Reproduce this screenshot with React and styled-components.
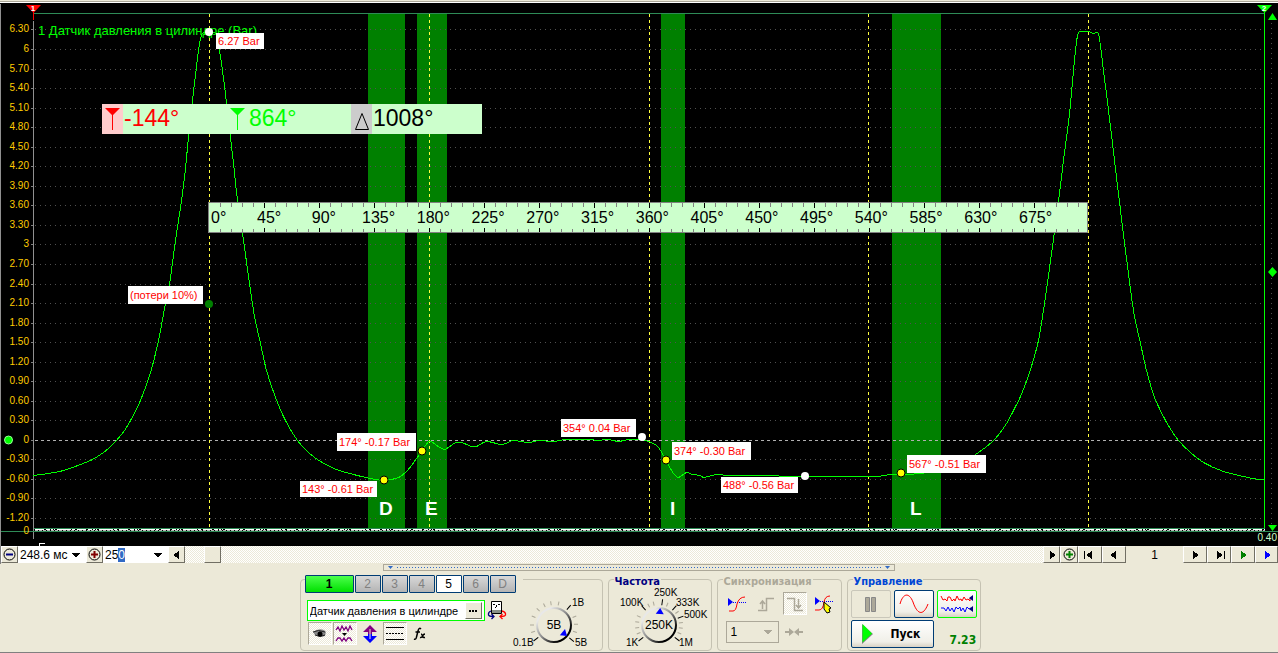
import React, { useEffect, useRef, useState } from "react";
import styled, { createGlobalStyle, css } from "styled-components";

const GlobalStyle = createGlobalStyle`
  * {
    box-sizing: border-box;
  }

  body {
    margin: 0;
    background: #ece9d8;
    color: #000;
    font-family: "Liberation Sans", Arial, sans-serif;
    font-size: 12px;
  }

  button, input, select {
    font: inherit;
    color: inherit;
    margin: 0;
    padding: 0;
    border-radius: 0;
  }
`;

// Chart drawing area, in chart units
const CHART = { x: 0, y: 3, width: 1278, height: 543 };
const left = (x) => `${((x - CHART.x) / CHART.width) * 100}%`;
const top = (y) => `${((y - CHART.y) / CHART.height) * 100}%`;

const TICKS = [
  ["6.30", 29], ["6", 49], ["5.70", 69], ["5.40", 88], ["5.10", 108], ["4.80", 127],
  ["4.50", 147], ["4.20", 166], ["3.90", 186], ["3.60", 205], ["3.30", 225], ["3", 244],
  ["2.70", 264], ["2.40", 284], ["2.10", 303], ["1.80", 323], ["1.50", 342], ["1.20", 362],
  ["0.90", 381], ["0.60", 401], ["0.30", 420], ["0", 440], ["-0.30", 459], ["-0.60", 479],
  ["-0.90", 498], ["-1.20", 518],
];

const BANDS = [
  { label: "D", x: 368, width: 37, textX: 379 },
  { label: "E", x: 417, width: 30, textX: 425 },
  { label: "I", x: 661, width: 24, textX: 670 },
  { label: "L", x: 892, width: 49, textX: 910 },
];

const CYCLE_LINES = [209, 429, 649, 868, 1088];

const PRESSURE =
  "33,475 48,473 63,470 80,464 92,459 103,452 110,446 116,440 124,430 130,420 140,400 150,372 158,340 165,303 169,284 175,240 " +
  "180,207 184,177 188,137 192,100 196,66 199,43 201,35 203,32 214,32 217,38 219,50 222,70 226,102 230,137 233,163 237,200 243,240 249,283 " +
  "254,316 260,343 266,370 275,397 285,420 297,440 308,452 320,461 336,469 353,474 370,478 384,480 398,477 405,472 411,465 421,451 " +
  "428,441 431,441 435,444 444,449 455,442 461,442 471,446 476,446 486,441 500,444 505,443 513,440 528,442 538,440 553,441 565,439 " +
  "590,439 597,440 608,439 618,441 628,439 642,439 648,441 656,445 660,450 666,461 673,473 678,477 686,472 692,474 700,475 703,477 " +
  "716,474 728,475 756,475 805,476 873,476 890,474 920,473 955,465 975,454 993,440 1006,423 1015,406 1020,396 1029,372 1038,340 1044,303 " +
  "1046,289 1052,246 1058,201 1063,160 1069,113 1073,70 1075,50 1077,35 1079,31 1088,31 1093,33 1098,33 1103,70 1110,126 1114,160 " +
  "1120,210 1125,250 1130,289 1134,316 1140,343 1146,370 1154,397 1165,420 1171,430 1178,440 1190,452 1203,462 1223,471 1243,476 1258,479 1264,479";

// Catmull-Rom spline through the samples
const smooth = (samples) => {
  const pts = samples.split(" ").map((s) => s.split(",").map(Number));
  const at = (i) => pts[Math.max(0, Math.min(pts.length - 1, i))];
  let d = `M${pts[0]}`;
  for (let i = 0; i < pts.length - 1; i++) {
    const [p0, p1, p2, p3] = [at(i - 1), at(i), at(i + 1), at(i + 2)];
    // handles stay short next to corners so the curve never overshoots
    const k = Math.min(1, Math.hypot(p2[0] - p1[0], p2[1] - p1[1]) / 12) / 7;
    const c1 = [p1[0] + (p2[0] - p0[0]) * k, p1[1] + (p2[1] - p0[1]) * k];
    const c2 = [p2[0] - (p3[0] - p1[0]) * k, p2[1] - (p3[1] - p1[1]) * k];
    d += `C${c1} ${c2} ${p2}`;
  }
  return d;
};

const POINTS = [
  { x: 209, y: 32, fill: "#fff" },
  { x: 209, y: 304, fill: "#008000" },
  { x: 384, y: 480, fill: "#ff0" },
  { x: 422, y: 451, fill: "#ff0" },
  { x: 642, y: 437, fill: "#fff" },
  { x: 666, y: 460, fill: "#ff0" },
  { x: 805, y: 476, fill: "#fff" },
  { x: 901, y: 473, fill: "#ff0" },
];

const CALLOUTS = [
  { text: "6.27 Bar", x: 216, y: 33, width: 48 },
  { text: "(потери 10%)", x: 128, y: 286, width: 75, tall: true },
  { text: "143° -0.61 Bar", x: 300, y: 481, width: 77 },
  { text: "174° -0.17 Bar", x: 337, y: 433, width: 79, tall: true },
  { text: "354° 0.04 Bar", x: 561, y: 419, width: 75, tall: true },
  { text: "374° -0.30 Bar", x: 672, y: 442, width: 79, tall: true },
  { text: "488° -0.56 Bar", x: 721, y: 477, width: 77 },
  { text: "567° -0.51 Bar", x: 907, y: 455, width: 79, tall: true },
];

const hatch = css`
  background-color: #fff;
  background-image: conic-gradient(#ece9d8 25%, #fff 0 50%, #ece9d8 0 75%, #fff 0);
  background-size: 2px 2px;
`;

const Page = styled.main`
  border-bottom: 1px solid #808080;
  min-width: 720px;
`;

const TopEdge = styled.div`
  height: 3px;
  border-top: 1px solid #ece9d8;
  border-bottom: 1px solid #fff;
  background: #aca899;
`;

const Scope = styled.section`
  position: relative;
  width: 100%;
  background: #000;
  aspect-ratio: ${CHART.width} / ${CHART.height};
  overflow: hidden;
`;

const Plot = styled.svg`
  display: block;
  width: 100%;
  height: 100%;
  font-family: "Liberation Sans", Arial, sans-serif;
`;

const Callout = styled.div`
  position: absolute;
  left: ${(p) => left(p.$x)};
  top: ${(p) => top(p.$y)};
  width: ${(p) => p.$width}px;
  height: ${(p) => (p.$tall ? 18 : 16)}px;
  padding-left: 2px;
  background: #fff;
  color: #f00;
  font-size: 11px;
  line-height: ${(p) => (p.$tall ? 18 : 16)}px;
  white-space: nowrap;
`;

const Readout = styled.div`
  position: absolute;
  left: ${left(102)};
  top: ${top(104)};
  display: flex;
  height: 30px;
  background: #ccffcc;
  font-size: 23px;
  line-height: 28px;
`;

const ReadoutItem = styled.div`
  display: flex;
  gap: 1px;
  width: ${(p) => p.$width}px;
  color: ${(p) => p.$color};
`;

const ReadoutIcon = styled.svg`
  width: 21px;
  height: 30px;
  background: ${(p) => p.$bg};
`;

const Ruler = styled.div`
  position: absolute;
  left: ${left(208)};
  top: ${top(202)};
  width: ${(880 / CHART.width) * 100}%;
  height: 31px;
  border: 1px solid #808080;
  background: #ccffcc;
`;

const RulerTicks = styled.svg`
  position: absolute;
  inset: 0;
  width: 100%;
  height: 100%;
`;

const RulerLabels = styled.div`
  display: flex;
  font-size: 16px;
  line-height: 29px;
`;

const RulerLabel = styled.span`
  flex: 1 1 0;
  text-align: center;
  white-space: nowrap;

  &:first-child {
    padding-left: 2px;
    text-align: left;
  }

  &:not(:first-child) {
    position: relative;
    right: 24px;
  }
`;

const Toolbar = styled.div`
  display: flex;
  height: 18px;
  border-left: 1px solid #808080;
`;

const ToolButton = styled.button`
  display: flex;
  flex: none;
  align-items: center;
  justify-content: center;
  width: ${(p) => p.$width || 17}px;
  height: 17px;
  border: 1px solid;
  border-color: #fff #716f64 #716f64 #fff;
  background: #ece9d8;
`;

const Combo = styled.div`
  display: flex;
  flex: none;
  width: ${(p) => p.$width}px;
  height: 17px;
  background: #fff;
`;

const ComboInput = styled.input`
  flex: 1;
  min-width: 0;
  border: 0;
  outline: 0;
  padding-left: 2px;
  background: #fff;

  &::selection {
    background: #316ac5;
    color: #fff;
  }
`;

const ComboArrow = styled.button`
  display: flex;
  align-items: center;
  width: 16px;
  border: 0;
  background: #fff;
`;

const Scroll = styled.input`
  flex: 1;
  min-width: 0;
  height: 17px;
  appearance: none;
  ${hatch}

  &::-webkit-slider-thumb {
    appearance: none;
    width: 17px;
    height: 17px;
    border: 1px solid;
    border-color: #fff #716f64 #716f64 #fff;
    background: #ece9d8;
  }
`;

const PageNumber = styled.span`
  width: 57px;
  text-align: center;
  line-height: 18px;
`;

const Splitter = styled.div`
  display: flex;
  align-items: center;
  justify-content: space-between;
  width: 40%;
  height: 7px;
  margin: 0 auto;
  padding: 0 4px;
  border: 1px solid #aca899;
`;

const SplitterDots = styled.div`
  flex: 1;
  height: 1px;
  margin: 0 4px;
  background: repeating-linear-gradient(90deg, #316ac5 0 1px, transparent 1px 3px);
`;

const Controls = styled.div`
  display: flex;
  justify-content: center;
  gap: 5px;
  padding: 8px 0 1px 2px;
`;

const Group = styled.section`
  display: flex;
  flex-direction: ${(p) => (p.$row ? "row" : "column")};
  width: ${(p) => p.$width}px;
  height: 72px;
  border: 1px solid #c5c2b2;
  border-radius: 4px;
`;

const GroupTitle = styled.h2`
  align-self: flex-start;
  margin: -5px 0 0 5px;
  padding: 0 1px;
  background: #ece9d8;
  color: ${(p) => p.$color};
  font-family: "DejaVu Sans Condensed", "DejaVu Sans", sans-serif;
  font-size: 11px;
  font-weight: bold;
  line-height: 13px;
`;

const ChannelColumn = styled.div`
  flex: none;
  width: 222px;
`;

const Channels = styled.div`
  display: flex;
  gap: 1px;
  margin: -5px 0 0 4px;
  padding-right: 4px;
  background: #ece9d8;
`;

const ChannelButton = styled.button`
  flex: none;
  width: ${(p) => (p.$wide ? 49 : 26)}px;
  height: 18px;
  border: 1px solid #003c74;
  border-radius: 1px;
  background: ${(p) =>
    p.$wide
      ? "linear-gradient(#4cff4c, #00e000)"
      : p.$on
      ? "#fff"
      : "linear-gradient(#d8d8d8, #b4b4b4)"};
  color: ${(p) => (p.$wide || p.$on ? "#000" : "#808080")};
  font-weight: ${(p) => (p.$wide ? "bold" : "normal")};
  line-height: 14px;
`;

const NameRow = styled.div`
  display: flex;
  gap: 3px;
  margin: 7px 0 0 6px;
`;

const NameBox = styled.div`
  display: flex;
  width: 178px;
  height: 21px;
  padding: 1px 2px 1px 0;
  border: 1px solid #0f0;
  background: #fff;
`;

const NameInput = styled.input`
  flex: 1;
  min-width: 0;
  padding-left: 2px;
  border: 0;
  outline: 0;
  font-size: 11px;
`;

const IconRow = styled.div`
  display: flex;
  gap: ${(p) => p.$gap || 1}px;
  margin: ${(p) => (p.$top ? `${p.$top}px` : "1px")} 0 0 7px;
`;

const IconButton = styled.button`
  display: flex;
  align-items: center;
  justify-content: center;
  width: 24px;
  height: 23px;
  border: 1px solid transparent;
  background: none;
  ${(p) =>
    p.$pressed &&
    css`
      border-color: #aca899 #fff #fff #aca899;
      ${hatch}
    `}
`;

const PlainIcon = styled.button`
  width: 20px;
  height: 21px;
  border: 0;
  background: none;
`;

const Icon = styled.svg`
  display: block;
  flex: none;
  overflow: visible;
`;

const Knob = styled.svg`
  display: block;
  flex: none;
  overflow: visible;
  font-family: "Liberation Sans", Arial, sans-serif;
  font-size: 10px;
`;

const SyncRow = styled.div`
  display: flex;
  align-items: center;
  gap: 6px;
  margin: 6px 0 0 8px;
`;

const SelectBox = styled.label`
  display: flex;
  align-items: center;
  width: 53px;
  height: 22px;
  padding-right: 4px;
  border: 1px solid #aca899;
`;

const SyncSelect = styled.select`
  flex: 1;
  min-width: 0;
  padding-left: 4px;
  border: 0;
  outline: 0;
  appearance: none;
  background: none;
`;

const RunGrid = styled.div`
  display: grid;
  grid-template-columns: 40px 40px 40px;
  grid-template-rows: 28px 28px;
  gap: 2px 3px;
  margin: 2px 0 0 3px;
`;

const RunButton = styled.button`
  display: flex;
  align-items: center;
  justify-content: center;
  border: 1px solid ${(p) => (p.$green ? "#0f0" : p.disabled ? "#c9c7ba" : "#003c74")};
  border-radius: 2px;
  background: ${(p) => (p.disabled ? "#ece9d8" : "linear-gradient(#fff, #f0efe8 80%, #d8d2c4)")};
`;

const StartButton = styled(RunButton)`
  grid-column: span 2;
  justify-content: flex-start;
  gap: 18px;
  padding-left: 9px;
  font-family: "DejaVu Sans Condensed", "DejaVu Sans", sans-serif;
  font-weight: bold;
`;

const Voltage = styled.output`
  align-self: center;
  padding: 12px 0 0 13px;
  color: #008000;
  font-family: "DejaVu Sans Condensed", "DejaVu Sans", sans-serif;
  font-size: 12px;
  font-weight: bold;
`;

// Small filled triangle used by the combo and scroll buttons
const Arrow = ({ dir = "right", color = "#000", bar = false, size = 4 }) => {
  const rotation = { right: 0, down: 90, left: 180 }[dir];
  return (
    <Icon width="12" height="10" viewBox="-6 -5 12 10" shapeRendering="crispEdges" aria-hidden="true">
      <g transform={`rotate(${rotation})`} fill={color}>
        <path d={`M${-size + 2} ${-size}V${size}L${size - (dir === "down" ? 1 : 0)} 0Z`} />
        {bar && <path d="M5 -4h1v8h-1z" />}
      </g>
    </Icon>
  );
};

const Zoom = ({ plus, color }) => (
  <Icon width="13" height="13" viewBox="0 0 13 13" aria-hidden="true">
    <circle cx="6.5" cy="6.5" r="5.5" fill="none" stroke="#000" />
    <path d={plus ? "M3 5.5h2.5V3h2v2.5H10v2H7.500V10h-2V7.500H3z" : "M3 5.500h7v2H3z"} fill={color} />
  </Icon>
);

const Waveforms = () => (
  <Plot
    viewBox={`${CHART.x} ${CHART.y} ${CHART.width} ${CHART.height}`}
    role="img"
    aria-label="Датчик давления в цилиндре (Bar)"
  >
    <g transform="translate(.5 .5)" shapeRendering="crispEdges" fill="none">
      {BANDS.map((b) => (
        <rect key={b.label} x={b.x - 0.5} y="13" width={b.width} height="515" fill="#008000" />
      ))}
      {TICKS.map(([label, y]) => (
        <g key={label}>
          {label === "0" ? (
            <path d={`M34 ${y}H1264`} stroke="#b0b0b0" strokeDasharray="3 3" />
          ) : (
            <path d={`M34 ${y}H1260`} stroke="#505050" strokeDasharray="1 4" />
          )}
          <path d={`M30 ${y}H33`} stroke="#808080" />
        </g>
      ))}
      <path d="M0 3V546M33 20V538" stroke="#909090" />
      <path d="M33 13H1264" stroke="#2e8b57" />
      {CYCLE_LINES.map((x) => (
        <path key={x} d={`M${x} 13V528`} stroke="#ffff40" strokeDasharray="3 3" />
      ))}
      <path d="M1271 22V526" stroke="#505050" strokeDasharray="1 4" />
      <path d="M1264 10V530" stroke="#00ff00" />
      <path d="M33 528H1264M0 531H1278" stroke="#2e8b57" />
      <path d="M34 529H1264" stroke="#fff" strokeDasharray="9 2 4 1 2 1 1 2 14 1 3 2" />
      <path d="M34 530H1264" stroke="#b8b8b8" strokeDasharray="3 1" />
      <path d="M39 546V543H44" stroke="#fff" />
      <path d={smooth(PRESSURE)} stroke="#00ff00" />
    </g>

    <g fill="#ffcc00" fontSize="10" textAnchor="end">
      {TICKS.map(([label, y]) => (
        <text key={label} x="29" y={y + 3}>{label}</text>
      ))}
      <text x="29" y="534">0</text>
    </g>
    <text x="38" y="35" fill="#00ff00" fontSize="13">1 Датчик давления в цилиндре (Bar)</text>
    <text x="1277" y="541" fill="#ccffcc" fontSize="10" textAnchor="end">0.40</text>

    <g fill="#fff" fontSize="19" fontWeight="bold">
      {BANDS.map((b) => (
        <text key={b.label} x={b.textX} y="515">{b.label}</text>
      ))}
    </g>

    {POINTS.map((p) => (
      <circle key={`${p.x}-${p.y}`} cx={p.x} cy={p.y} r="4" fill={p.fill} stroke={p.fill === "#ff0" ? "#000" : "none"} />
    ))}
    <circle cx="8.5" cy="440" r="4" fill="#00ff00" stroke="#9f9" />

    {/* Time markers */}
    <path d="M26 5H41L33.500 13Z" fill="#f00" />
    <path d="M33 11h1v9h-1z" fill="#f00" />
    <path d="M1257 5H1272L1264.500 13Z" fill="#00ff00" />
    <g fill="#fff" fontSize="8" fontWeight="bold" textAnchor="middle">
      <text x="33" y="11">1</text>
      <text x="1264" y="11">2</text>
    </g>
    <path d="M1268 20H1277L1272.500 13ZM1268 525H1277L1272.500 531ZM1272.500 267L1277 272L1272.500 277L1268 272Z" fill="#00ff00" />
  </Plot>
);

const MarkerReadout = () => (
  <Readout>
    <ReadoutItem $width={125} $color="#f00">
      <ReadoutIcon $bg="#ffcccc" viewBox="0 0 21 30" aria-hidden="true">
        <path d="M3 4H18L11 11V26H10V11Z" fill="#f00" />
      </ReadoutIcon>
      -144°
    </ReadoutItem>
    <ReadoutItem $width={124} $color="#00ff00">
      <ReadoutIcon $bg="#ccffcc" viewBox="0 0 21 30" aria-hidden="true">
        <path d="M3 4H18L11 11V26H10V11Z" fill="#00ff00" />
      </ReadoutIcon>
      864°
    </ReadoutItem>
    <ReadoutItem $width={131} $color="#000">
      <ReadoutIcon $bg="#cccccc" viewBox="0 0 21 30" aria-hidden="true">
        <path d="M4.500 25.500L11 9.500L17.500 25.500Z" fill="none" stroke="#000" />
      </ReadoutIcon>
      1008°
    </ReadoutItem>
  </Readout>
);

const DegreeRuler = () => (
  <Ruler>
    <RulerTicks viewBox="0 0 878 29" preserveAspectRatio="none" shapeRendering="crispEdges" aria-hidden="true">
      {Array.from({ length: 79 }, (_, i) => i + 1).map((i) => {
        const major = i % 5 === 0;
        const size = major ? 5 : 4;
        return (
          <path
            key={i}
            d={`M${i * 11} 0h1v${size}h-1zM${i * 11} ${29 - size + 1}h1v${size}h-1z`}
            fill={major ? "#000" : "#808080"}
          />
        );
      })}
    </RulerTicks>
    <RulerLabels>
      {Array.from({ length: 16 }, (_, i) => (
        <RulerLabel key={i}>{i * 45}°</RulerLabel>
      ))}
    </RulerLabels>
  </Ruler>
);

const Dial = ({ cx, cy, value, pointer, ticks, labels, ...rest }) => (
  <Knob {...rest} role="img" aria-label={value}>
    <defs>
      <linearGradient id={`rim-${value}`} x1="0" y1="0" x2="1" y2="1">
        <stop offset="0.2" stopColor="#e8e8e8" />
        <stop offset="0.5" stopColor="#888" />
        <stop offset="0.8" stopColor="#000" />
      </linearGradient>
    </defs>
    {ticks.map(({ angle, dark }) => (
      <path
        key={angle}
        d={dark ? "M20 0H26" : "M20 0H24"}
        transform={`translate(${cx} ${cy}) rotate(${angle})`}
        stroke={dark ? "#000" : "#aca899"}
      />
    ))}
    <circle cx={cx} cy={cy} r="17" fill="#ece9d8" stroke={`url(#rim-${value})`} strokeWidth="2" />
    <path d="M17 0L11 -4V4Z" transform={`translate(${cx} ${cy}) rotate(${pointer})`} fill="#00f" />
    <text x={cx} y={cy + 4} fontSize="12" textAnchor="middle">{value}</text>
    {labels.map(([text, x, y]) => (
      <text key={text} x={x} y={y}>{text}</text>
    ))}
  </Knob>
);

const VOLT_TICKS = [
  { angle: 142, dark: true }, { angle: 162 }, { angle: 180 }, { angle: 202 }, { angle: 224 }, { angle: 244 },
  { angle: 262 }, { angle: 282 }, { angle: 310, dark: true }, { angle: 338 }, { angle: 358 }, { angle: 18 },
  { angle: 40, dark: true },
];

const RATE_TICKS = [
  { angle: 142, dark: true }, { angle: 158 }, { angle: 173 }, { angle: 188 }, { angle: 203 }, { angle: 228, dark: true },
  { angle: 242 }, { angle: 256 }, { angle: 278, dark: true }, { angle: 292 }, { angle: 312, dark: true }, { angle: 325 },
  { angle: 340, dark: true }, { angle: 354 }, { angle: 8 }, { angle: 22 }, { angle: 38, dark: true },
];

const App = () => {
  const [channel, setChannel] = useState("5");
  const [sensor, setSensor] = useState("Датчик давления в цилиндре");
  const [span, setSpan] = useState("248.6 мс");
  const [scale, setScale] = useState("250");
  const [scroll, setScroll] = useState(19);
  const scaleRef = useRef(null);

  // Select the last digit so it can be overtyped
  useEffect(() => {
    scaleRef.current.focus();
    scaleRef.current.setSelectionRange(2, 3);
  }, []);

  return (
    <Page>
      <GlobalStyle />
      <TopEdge />

      <Scope>
        <Waveforms />
        {CALLOUTS.map((c) => (
          <Callout key={c.text} $x={c.x} $y={c.y} $width={c.width} $tall={c.tall}>{c.text}</Callout>
        ))}
        <MarkerReadout />
        <DegreeRuler />
      </Scope>

      <Toolbar>
        <ToolButton aria-label="Уменьшить"><Zoom color="#000080" /></ToolButton>
        <Combo $width={68}>
          <ComboInput aria-label="Длительность" value={span} onChange={(e) => setSpan(e.target.value)} />
          <ComboArrow aria-label="Выбрать длительность"><Arrow dir="down" /></ComboArrow>
        </Combo>
        <ToolButton aria-label="Увеличить"><Zoom plus color="#800000" /></ToolButton>
        <Combo $width={65}>
          <ComboInput ref={scaleRef} aria-label="Масштаб" value={scale} onChange={(e) => setScale(e.target.value)} />
          <ComboArrow aria-label="Выбрать масштаб"><Arrow dir="down" /></ComboArrow>
        </Combo>
        <ToolButton aria-label="Влево"><Arrow dir="left" /></ToolButton>
        <Scroll
          type="range"
          aria-label="Прокрутка"
          min="0"
          max="841"
          value={scroll}
          onChange={(e) => setScroll(Number(e.target.value))}
        />
        <ToolButton aria-label="Вправо"><Arrow /></ToolButton>
        <ToolButton $width={18} aria-label="Добавить"><Zoom plus color="#008000" /></ToolButton>
        <ToolButton $width={24} aria-label="Первая"><Arrow dir="left" bar /></ToolButton>
        <ToolButton $width={24} aria-label="Назад"><Arrow dir="left" /></ToolButton>
        <PageNumber>1</PageNumber>
        <ToolButton $width={24} aria-label="Вперёд"><Arrow /></ToolButton>
        <ToolButton $width={24} aria-label="Последняя"><Arrow bar /></ToolButton>
        <ToolButton $width={24} aria-label="Воспроизвести"><Arrow color="#008000" /></ToolButton>
        <ToolButton $width={23} aria-label="Быстро"><Arrow color="#00f" /></ToolButton>
      </Toolbar>

      <Splitter>
        <Icon width="5" height="3" viewBox="0 0 5 3" aria-hidden="true"><path d="M0 0h5L2.500 3z" fill="#316ac5" /></Icon>
        <SplitterDots />
        <Icon width="5" height="3" viewBox="0 0 5 3" aria-hidden="true"><path d="M0 0h5L2.500 3z" fill="#316ac5" /></Icon>
      </Splitter>

      <Controls>
        <Group $width={303} $row>
          <ChannelColumn>
            <Channels>
              {["1", "2", "3", "4", "5", "6", "D"].map((name) => (
                <ChannelButton key={name} $wide={name === "1"} $on={name === channel} onClick={() => setChannel(name)}>
                  {name}
                </ChannelButton>
              ))}
            </Channels>
            <NameRow>
              <NameBox>
                <NameInput aria-label="Датчик" value={sensor} onChange={(e) => setSensor(e.target.value)} />
                <ToolButton aria-label="Выбрать датчик">
                  <Icon width="8" height="2" viewBox="0 0 8 2" aria-hidden="true">
                    <path d="M0 0h2v2H0zM3 0h2v2H3zM6 0h2v2H6z" />
                  </Icon>
                </ToolButton>
              </NameBox>
              <PlainIcon aria-label="Сменить датчик">
                <Icon width="18" height="19" viewBox="0 0 18 19" aria-hidden="true">
                  <path d="M3.500 .5h10v12h-10z" fill="#fff" stroke="#000" />
                  <path d="M4 9h9v3H4z" fill="#889088" />
                  <path d="M5 3h2v1H5zM8 4h1v2H8zM10 3h2v1h-2zM7 6h1v1H7z" />
                  <path d="M3 10Q0 11 .5 14Q1 15.500 5 15.500M3.500 13L6 15.500L3.500 18" fill="none" stroke="#000080" strokeWidth="1.300" />
                  <path d="M14 10Q18 11 17.500 14Q17 15.500 12 15.500M14.500 13L12 15.500L14.500 18" fill="none" stroke="#f00" strokeWidth="1.300" />
                </Icon>
              </PlainIcon>
            </NameRow>
            <IconRow>
              <IconButton $pressed aria-label="Показать">
                <Icon width="13" height="11" viewBox="0 0 13 11" aria-hidden="true">
                  <path d="M0 4Q5 0 11 2L13 4L12 8Q7 10 2 7Z" fill="#888" />
                  <path d="M0 4Q5 1 12 4M2 7Q7 10 12 7" fill="none" stroke="#222" />
                  <circle cx="7" cy="6" r="2.500" />
                </Icon>
              </IconButton>
              <IconButton $pressed aria-label="Сжатие">
                <Icon width="17" height="17" viewBox="0 0 17 17" aria-hidden="true">
                  <path d="M0 5L2 2L4 6L6 1L8 5L10 2L12 6L14 1L16 5M0 16L2 13L4 13L6 16L8 13L10 16L12 13L14 13L16 16" fill="none" stroke="#800080" strokeWidth="1.300" />
                  <path d="M6 8h5L8.500 11z" />
                </Icon>
              </IconButton>
              <IconButton aria-label="Сдвиг по вертикали">
                <Icon width="14" height="18" viewBox="0 0 14 18" aria-hidden="true">
                  <path d="M7 0L14 7H9V9H5V7H0Z" fill="#800080" />
                  <path d="M7 18L14 11H9V9H5V11H0Z" fill="#00f" />
                  <path d="M7 4V14" stroke="#ece9d8" />
                </Icon>
              </IconButton>
              <IconButton $pressed aria-label="Сетка">
                <Icon width="18" height="13" viewBox="0 0 18 13" shapeRendering="crispEdges" aria-hidden="true">
                  <path d="M0 .5H18M0 12.500H18" stroke="#000" />
                  <path d="M0 6.500H18" stroke="#000" strokeDasharray="2 1" />
                </Icon>
              </IconButton>
              <IconButton aria-label="Функция">
                <Icon width="14" height="16" viewBox="0 0 14 16" aria-hidden="true">
                  <path d="M8 3Q6 1 5 5L3.500 11Q3 14 1 13M2.500 6H7M8 8Q9 8 9.500 10Q10 12 12 11.500M12 8Q10.500 8 9.500 10Q8.500 12 7 11.500" fill="none" stroke="#000" strokeWidth="1.500" />
                </Icon>
              </IconButton>
            </IconRow>
          </ChannelColumn>
          <Dial
            width="79"
            height="70"
            viewBox="522 580 79 70"
            cx={553}
            cy={625}
            value="5В"
            pointer={40}
            ticks={VOLT_TICKS}
            labels={[["1В", 571, 606], ["5В", 574, 646], ["0.1В", 512, 646]]}
          />
        </Group>

        <Group $width={104}>
          <GroupTitle $color="#000080">Частота</GroupTitle>
          <Dial
            width="102"
            height="62"
            viewBox="608 588 102 62"
            cx={658}
            cy={625}
            value="250K"
            pointer={-86}
            ticks={RATE_TICKS}
            labels={[["250K", 653, 596], ["100K", 619, 606], ["333K", 675, 606], ["500K", 683, 618], ["1K", 625, 646], ["1M", 678, 646]]}
          />
        </Group>

        <Group $width={125}>
          <GroupTitle $color="#aca899">Синхронизация</GroupTitle>
          <IconRow $gap={5} $top={4}>
            <IconButton aria-label="Уровень">
              <Icon width="18" height="16" viewBox="0 0 18 16" aria-hidden="true">
                <path d="M0 2L5 6L0 10Z" fill="#00f" />
                <path d="M5 6.500H18" stroke="#00f" strokeDasharray="1 1" />
                <path d="M1 15H5Q8 15 9 8Q11 1 17 1" fill="none" stroke="#f00" />
              </Icon>
            </IconButton>
            <IconButton disabled aria-label="Фронт">
              <Icon width="18" height="16" viewBox="0 0 18 16" aria-hidden="true">
                <path d="M1 14.500H9.500V2.500H17M5.500 13V5M3 8L5.500 5L8 8" fill="none" stroke="#aca899" strokeWidth="1.500" />
              </Icon>
            </IconButton>
            <IconButton $pressed disabled aria-label="Спад">
              <Icon width="18" height="16" viewBox="0 0 18 16" aria-hidden="true">
                <path d="M1 2.500H8.500V14.500H17M12.500 3V12M10 9L12.500 12L15 9" fill="none" stroke="#aca899" strokeWidth="1.500" />
              </Icon>
            </IconButton>
            <IconButton aria-label="Указать уровень">
              <Icon width="18" height="18" viewBox="0 0 18 18" aria-hidden="true">
                <path d="M0 2L5 6L0 10Z" fill="#00f" />
                <path d="M5 6.500H18" stroke="#00f" strokeDasharray="1 1" />
                <path d="M0 15H4Q8 15 9 7Q10 1 15 1" fill="none" stroke="#f00" />
                <path d="M9 7L16 13L14 14L15 17L12 18L9 14Z" fill="#ff0" stroke="#000" />
              </Icon>
            </IconButton>
          </IconRow>
          <SyncRow>
            <SelectBox>
              <SyncSelect aria-label="Канал синхронизации" defaultValue="1">
                <option value="1">1</option>
              </SyncSelect>
              <Arrow dir="down" color="#aca899" />
            </SelectBox>
            <Icon width="18" height="10" viewBox="0 0 18 10" aria-hidden="true">
              <path d="M0 4H4V1L9 5L14 1V4H18V6H14V9L9 5L4 9V6H0Z" fill="#aca899" />
            </Icon>
          </SyncRow>
        </Group>

        <Group $width={134}>
          <GroupTitle $color="#0046d5">Управление</GroupTitle>
          <RunGrid>
            <RunButton disabled aria-label="Пауза">
              <Icon width="11" height="15" viewBox="0 0 11 15" aria-hidden="true">
                <path d="M.5 .5h4v14h-4zM6.500 .5h4v14h-4z" fill="#aca899" stroke="#888" />
              </Icon>
            </RunButton>
            <RunButton aria-label="Один сигнал">
              <Icon width="28" height="18" viewBox="0 0 28 18" aria-hidden="true">
                <path d="M0 9C3 -2 9 -3 13 7C17 19 23 22 28 9" fill="none" stroke="#f00" />
              </Icon>
            </RunButton>
            <RunButton $green aria-label="Все сигналы">
              <Icon width="32" height="20" viewBox="0 0 32 20" aria-hidden="true">
                <path d="M0 2L2 6L4 5L6 7L7 3L9 3L11 7L13 5L14 7L16 2L18 6L20 5L21 7L23 3L25 6L27 5L29 7V4L32 3" fill="none" stroke="#f00" />
                <path d="M0 14H3L5 17L7 13L9 17L11 14L13 18L15 13L17 15L19 13L20 17L22 14L24 18L26 13L28 15L30 14" fill="none" stroke="#00f" />
                <path d="M32 1V7L28 4ZM32 12V18L28 15Z" fill="#000080" />
              </Icon>
            </RunButton>
            <StartButton>
              <Icon width="12" height="20" viewBox="0 0 12 20" aria-hidden="true">
                <path d="M1 0L12 10L1 20Z" fill="#808080" />
                <path d="M1.500 0L11 9.500L1.500 18.500Z" fill="#0f0" />
              </Icon>
              Пуск
            </StartButton>
            <Voltage>7.23</Voltage>
          </RunGrid>
        </Group>
      </Controls>
    </Page>
  );
};

export default App;
